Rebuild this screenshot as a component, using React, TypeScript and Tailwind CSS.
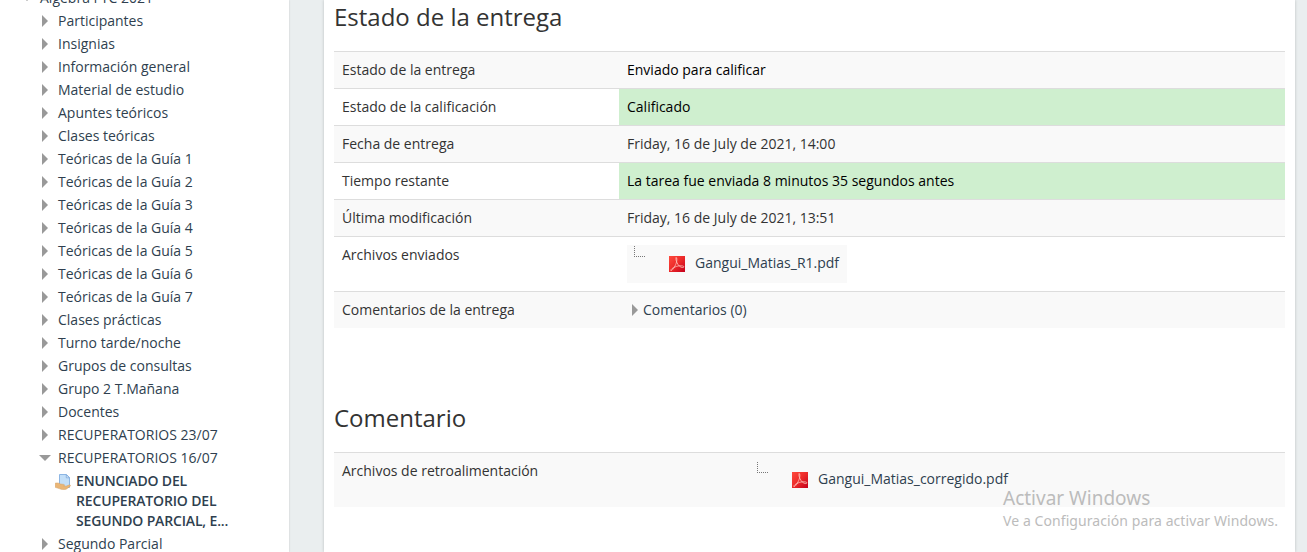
import type { ReactNode } from "react";

const sections = [
  "Participantes",
  "Insignias",
  "Información general",
  "Material de estudio",
  "Apuntes teóricos",
  "Clases teóricas",
  "Teóricas de la Guía 1",
  "Teóricas de la Guía 2",
  "Teóricas de la Guía 3",
  "Teóricas de la Guía 4",
  "Teóricas de la Guía 5",
  "Teóricas de la Guía 6",
  "Teóricas de la Guía 7",
  "Clases prácticas",
  "Turno tarde/noche",
  "Grupos de consultas",
  "Grupo 2 T.Mañana",
  "Docentes",
  "RECUPERATORIOS 23/07",
];

function RightArrow() {
  return (
    <svg className="block h-3 w-1.5 shrink-0" viewBox="0 0 6 12">
      <path d="M0 0L6 6L0 12Z" fill="#999" />
    </svg>
  );
}

function DownArrow() {
  return (
    <svg className="block h-1.5 w-3 shrink-0" viewBox="0 0 12 6">
      <path d="M0 0H12L6 6Z" fill="#999" />
    </svg>
  );
}

function AssignIcon() {
  return (
    <svg className="block size-4 shrink-0" viewBox="0 0 16 16">
      <path d="M4.5.5H11.5L14.5 3.5V13.5H4.5Z" fill="#c3dff8" stroke="#8db6e4" />
      <path d="M11.3.8V3.8H14.3Z" fill="#f0f8ff" stroke="#6f9ed4" strokeWidth=".7" />
      <path
        d="M.2 9.2C2 8.7 4 9 5.5 10L8.8 10.4C9.8 10.6 9.7 11.8 8.7 12L11 12.2L14 11C15.4 10.6 16 11.6 15 12.4L11.5 15C9.5 16 6.2 15.7 4.2 14.6L.2 13.3Z"
        fill="#eab676"
        stroke="#d39e62"
        strokeWidth=".5"
      />
    </svg>
  );
}

function PdfIcon() {
  return (
    <svg className="block size-4 shrink-0" viewBox="0 0 16 16">
      <defs>
        <linearGradient id="pdf-red" x1="0" y1="0" x2="1" y2="1">
          <stop offset="0" stopColor="#ff4a3d" />
          <stop offset=".5" stopColor="#ec2a29" />
          <stop offset="1" stopColor="#c4001c" />
        </linearGradient>
      </defs>
      <rect width="16" height="16" fill="url(#pdf-red)" />
      <path
        d="M7 1.5C6.4 4.3 8.3 8.2 10.6 10.3C12 11.5 14.7 12 14.9 11C15.1 9.5 10.2 9.3 6.4 10.8C3.4 12 1.5 13.7 1.8 14.5C3 15.3 6 10.5 7.2 7.2C8 5 8.2 1.4 7 1.5Z"
        fill="none"
        stroke="#ffc9c2"
        strokeWidth=".75"
      />
    </svg>
  );
}

function TreeItem({ label, open = false }: { label: string; open?: boolean }) {
  return (
    <li className="flex h-[23px] items-center pt-[3px]">
      <span className="flex w-[19px] shrink-0 justify-center">
        {open ? <DownArrow /> : <RightArrow />}
      </span>
      <span className="pl-1">{label}</span>
    </li>
  );
}

function FileLink({ name }: { name: string }) {
  return (
    <div className="flex h-[38px] w-fit items-start bg-[#f9f9f9] pr-2 pl-[7px]">
      <svg className="mt-px block h-[11px] w-[11px] shrink-0" viewBox="0 0 11 11" shapeRendering="crispEdges">
        <path d="M.5 0V11M0 10.5H11" stroke="#777" strokeDasharray="1 1" />
      </svg>
      <div className="flex items-center pt-2 pl-6">
        <span className="pt-px">
          <PdfIcon />
        </span>
        <a className="pl-2.5 text-[#2f3f4f]">{name}</a>
      </div>
    </div>
  );
}

interface RowProps {
  label: string;
  children: ReactNode;
  striped?: boolean;
  success?: boolean;
  dark?: boolean;
  wide?: boolean;
}

function Row({ label, children, striped, success, dark, wide }: RowProps) {
  return (
    <tr className={striped ? "bg-[#f9f9f9]" : "bg-white"}>
      <td className={`border-t border-[#ddd] p-2 align-top ${wide ? "w-[408px]" : "w-[285px]"}`}>{label}</td>
      <td
        className={`border-t border-[#ddd] p-2 align-top ${success ? "bg-[#cfefcf]" : ""} ${
          success || dark ? "text-black" : ""
        }`}
      >
        {children}
      </td>
    </tr>
  );
}

export default function App() {
  return (
    <div className="relative flex h-[552px] w-[1307px] justify-between overflow-hidden bg-[#eaeeef] font-['Open_Sans',sans-serif] text-sm leading-5 text-[#333]">
      <aside className="h-full w-[289px] shrink-0 overflow-hidden bg-white text-[#2f3f4f] shadow-[0_0_2px_rgba(0,0,0,0.15)]">
        <ul className="-mt-[15px] pl-[35px]">
          <li className="-ml-[18px] flex h-[23px] items-center pt-[3px]">
            <span className="flex w-[19px] justify-center">
              <DownArrow />
            </span>
            <span className="pl-1">Álgebra FTC 2021</span>
          </li>
          {sections.map((s) => (
            <TreeItem key={s} label={s} />
          ))}
          <TreeItem label="RECUPERATORIOS 16/07" open />
          <li className="flex items-start gap-[5px] pt-[3px] pl-5">
            <span className="pt-[3px]">
              <AssignIcon />
            </span>
            <span className="w-[170px] font-semibold tracking-[-0.16px]">
              ENUNCIADO DEL
              <br />
              RECUPERATORIO DEL
              <br />
              SEGUNDO PARCIAL, E...
            </span>
          </li>
          <TreeItem label="Segundo Parcial" />
        </ul>
      </aside>

      <main className="mr-3 h-full w-[971px] shrink-0 bg-white px-2.5 shadow-[0_0_3px_rgba(0,0,0,0.2)]">
        <h3 className="h-[51px] text-2xl leading-[33px]">Estado de la entrega</h3>
        <table className="w-full table-fixed border-separate border-spacing-0">
          <tbody>
            <Row label="Estado de la entrega" striped dark>
              Enviado para calificar
            </Row>
            <Row label="Estado de la calificación" success>
              Calificado
            </Row>
            <Row label="Fecha de entrega" striped>
              Friday, 16 de July de 2021, 14:00
            </Row>
            <Row label="Tiempo restante" success>
              La tarea fue enviada 8 minutos 35 segundos antes
            </Row>
            <Row label="Última modificación" striped>
              Friday, 16 de July de 2021, 13:51
            </Row>
            <Row label="Archivos enviados">
              <FileLink name="Gangui_Matias_R1.pdf" />
            </Row>
            <Row label="Comentarios de la entrega" striped>
              <a className="flex items-center gap-[5px] pl-[5px] text-[#2f3f4f]">
                <RightArrow />
                Comentarios (0)
              </a>
            </Row>
          </tbody>
        </table>
        <h3 className="mt-[73px] h-[51px] text-2xl leading-[33px]">Comentario</h3>
        <table className="w-full table-fixed border-separate border-spacing-0">
          <tbody>
            <Row label="Archivos de retroalimentación" striped wide>
              <FileLink name="Gangui_Matias_corregido.pdf" />
            </Row>
          </tbody>
        </table>
      </main>

      <div className="absolute top-[485px] left-[1003px] font-['Noto_Sans',sans-serif] whitespace-nowrap text-[#bcbcbc]">
        <p className="text-[19px] leading-[26px]">Activar Windows</p>
        <p className="text-sm leading-5 tracking-[0.08px]">Ve a Configuración para activar Windows.</p>
      </div>
    </div>
  );
}
